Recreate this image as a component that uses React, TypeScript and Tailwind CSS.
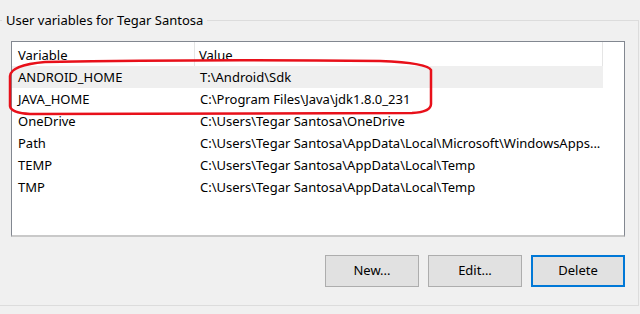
import React from "react";

const rows = [
  { name: "ANDROID_HOME", value: "T:\\Android\\Sdk", selected: true },
  { name: "JAVA_HOME", value: "C:\\Program Files\\Java\\jdk1.8.0_231" },
  { name: "OneDrive", value: "C:\\Users\\Tegar Santosa\\OneDrive" },
  { name: "Path", value: "C:\\Users\\Tegar Santosa\\AppData\\Local\\Microsoft\\WindowsApps..." },
  { name: "TEMP", value: "C:\\Users\\Tegar Santosa\\AppData\\Local\\Temp" },
  { name: "TMP", value: "C:\\Users\\Tegar Santosa\\AppData\\Local\\Temp" },
];

function Button({ label, focused }: { label: string; focused?: boolean }) {
  return (
    <button
      className={`${
        focused ? "border-[#0078d7] shadow-[inset_0_0_0_1px_#0078d7]" : "border-[#adadad]"
      } w-[94px] h-[32px] border bg-[#e1e1e1] text-[13px] text-black`}
    >
      {label}
    </button>
  );
}

export default function App() {
  return (
    <div
      className="relative w-[640px] h-[314px] overflow-hidden bg-[#f0f0f0] text-black"
      style={{ fontFamily: '"Noto Sans", "Open Sans", sans-serif' }}
    >
      {/* Group box */}
      <div className="relative mt-[20px] w-[639px] h-[286px] border border-l-0 border-[#dcdcdc]">
        <span className="absolute left-[2px] top-[-11px] px-[4px] bg-[#f0f0f0] text-[13px] leading-[20px] text-black">
          User variables for Tegar Santosa
        </span>

        {/* List view */}
        <div className="ml-[11px] mt-[20px] w-[614px] h-[196px] border border-b-2 border-[#828790] border-b-[#c9c9c9] bg-white">
          <div className="flex h-[24px] w-[591px] overflow-hidden text-[13px] leading-[27px]">
            <div className="w-[183px] shrink-0 pl-[6px] border-r border-[#e5e5e5]">Variable</div>
            <div className="flex-1 pl-[4px] border-r border-[#e5e5e5]">Value</div>
          </div>
          <ul className="w-[591px]">
            {rows.map((row) => (
              <li
                key={row.name}
                className={`${row.selected ? "bg-[#efefef]" : ""} flex h-[22px] text-[13px] leading-[23px] whitespace-nowrap`}
              >
                <span className="w-[184px] shrink-0 pl-[6px]">{row.name}</span>
                <span className="flex-1 min-w-0 overflow-hidden pl-[4px]">{row.value}</span>
              </li>
            ))}
          </ul>
        </div>

        {/* Buttons */}
        <div className="flex justify-end gap-[9px] mt-[18px] w-[625px]">
          <Button label="New..." />
          <Button label="Edit..." />
          <Button label="Delete" focused />
        </div>
      </div>

      {/* Red annotation */}
      <svg className="absolute left-0 top-0 pointer-events-none" width="640" height="314">
        <path
          d="M 10 76 Q 11 65 45 62 Q 200 59 380 61 Q 428 63 431 70 L 431 104 Q 431 112 412 113 L 30 114 Q 11 113 10 106 Z"
          fill="none"
          stroke="#e8101a"
          strokeWidth="2.5"
        />
      </svg>
    </div>
  );
}
